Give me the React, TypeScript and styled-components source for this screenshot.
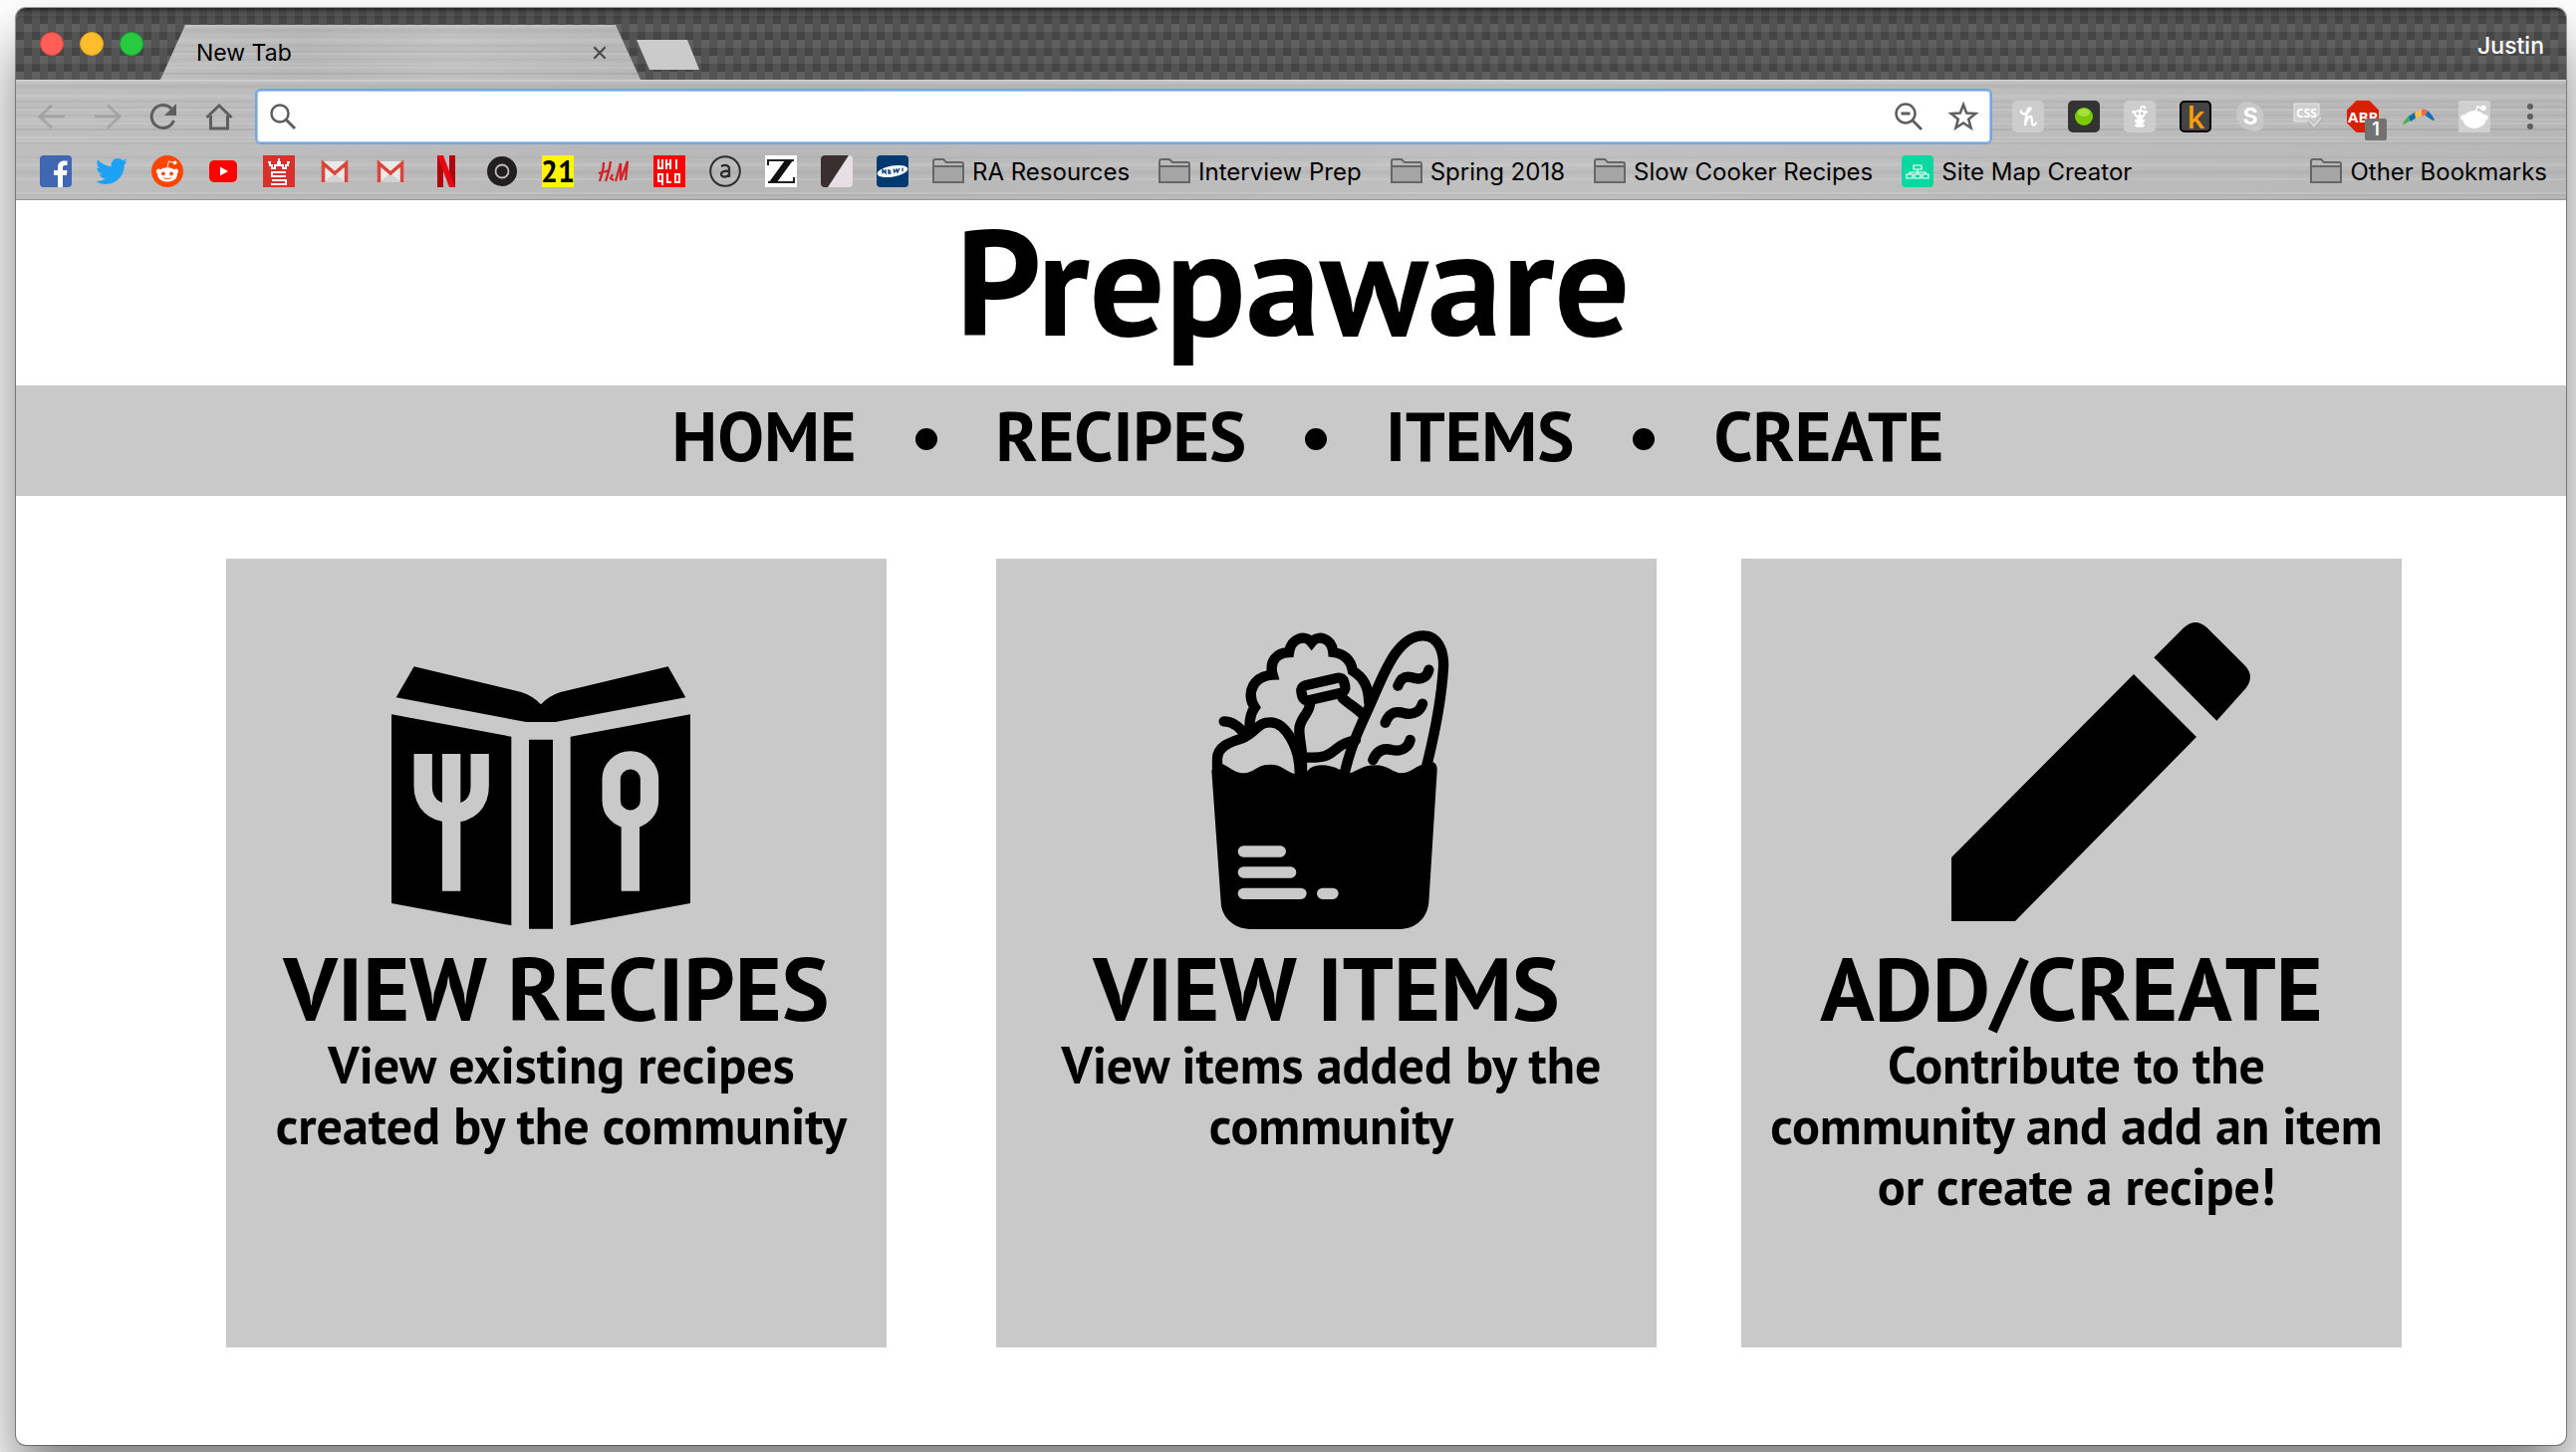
import React from "react";
import styled, { createGlobalStyle, css } from "styled-components";
import { FaTwitter, FaRedditAlien } from "react-icons/fa";

const uiFont = `Inter, Roboto, "Liberation Sans", sans-serif`;
const pageFont = `"PT Sans", Lato, "Open Sans", sans-serif`;

const Global = createGlobalStyle`
  *, *::before, *::after { box-sizing: border-box; }
  body { margin: 0; padding: 8px 10px 7px 16px; background: #fff; color: #000; }
  button { border: 0; padding: 0; background: none; font: inherit; color: inherit; cursor: pointer; }
  a { color: inherit; text-decoration: none; }
  ul { list-style: none; margin: 0; padding: 0; }
  svg { display: block; overflow: visible; }
`;

const brushedMetal = css`
  background-color: #bbbbbb;
  background-image:
    repeating-linear-gradient(180deg, rgba(255,255,255,0.11) 0 2px, transparent 2px 6px, rgba(0,0,0,0.03) 6px 8px, transparent 8px 14px),
    repeating-linear-gradient(180deg, transparent 0 4px, rgba(0,0,0,0.035) 4px 6px, transparent 6px 16px, rgba(255,255,255,0.08) 16px 18px, transparent 18px 22px),
    linear-gradient(90deg, rgba(255,255,255,0.05), rgba(0,0,0,0.02) 30%, rgba(255,255,255,0.08) 60%, rgba(0,0,0,0.02));
`;

const Window = styled.div`
  display: flex;
  flex-direction: column;
  min-height: calc(100vh - 15px);
  border-radius: 10px;
  overflow: hidden;
  background: #fff;
  box-shadow: 0 0 0 1px rgba(0, 0, 0, 0.38), 0 36px 60px rgba(0, 0, 0, 0.5);
`;

/* carbon-fibre weave: light and dark 8px threads in a brick pattern */
const TitleBar = styled.div`
  display: flex;
  align-items: flex-end;
  height: 72px;
  padding: 0 22px 0 24px;
  font-family: ${uiFont};
  background-color: #535353;
  background-image:
    linear-gradient(180deg, rgba(0,0,0,0.6) 0, rgba(0,0,0,0.2) 4px, transparent 12px),
    conic-gradient(at 8px 8px, transparent 75%, #606060 0),
    conic-gradient(at 8px 8px, transparent 75%, #606060 0),
    conic-gradient(at 8px 8px, transparent 75%, #454545 0),
    conic-gradient(at 8px 8px, transparent 75%, #454545 0);
  background-size: auto, 16px 32px, 16px 32px, 16px 32px, 16px 32px;
  background-position: 0 0, 0 0, 8px 16px, 8px 8px, 0 24px;
`;

const Lights = styled.div`
  display: flex;
  gap: 16px;
  height: 72px;
  align-items: center;
`;

const Light = styled.button<{ $fill: string; $edge: string }>`
  width: 24px;
  height: 24px;
  border-radius: 50%;
  background: ${(p) => p.$fill};
  border: 1px solid ${(p) => p.$edge};
`;

const Tab = styled.div`
  ${brushedMetal}
  display: flex;
  align-items: center;
  justify-content: space-between;
  width: 482px;
  height: 55px;
  margin-left: 17px;
  padding: 0 34px 0 36px;
  font-size: 23px;
  clip-path: polygon(25px 0, calc(100% - 25px) 0, 100% 100%, 0 100%);
`;

const NewTab = styled.button`
  width: 63px;
  height: 30px;
  margin: 0 0 10px -4px;
  background: #cbcbcb;
  clip-path: polygon(0 0, 51px 0, 100% 100%, 13px 100%);
`;

const Profile = styled.button`
  height: 72px;
  margin-left: auto;
  padding-top: 4px;
  font-size: 23px;
  font-weight: 500;
  color: #fff;
`;

const Chrome = styled.div`
  ${brushedMetal}
  border-top: 1px solid #d4d4d4;
  border-bottom: 1px solid #9b9b9b;
  font-family: ${uiFont};
  font-size: 24px;
`;

const Toolbar = styled.div`
  display: flex;
  align-items: center;
  height: 72px;
  padding: 0 28px 0 20px;
`;

const IconRow = styled.div`
  display: flex;
  gap: 24px;
`;

const IconButton = styled.button<{ $faded?: boolean }>`
  position: relative;
  width: 32px;
  height: 32px;
  opacity: ${(p) => (p.$faded ? 0.25 : 1)};
`;

const UrlBox = styled.form`
  display: flex;
  flex: 1;
  align-items: center;
  height: 56px;
  margin: 0 20px;
  padding: 0 10px;
  background: #fff;
  border: 2px solid #74a5dc;
  border-radius: 6px;
  box-shadow: inset 0 0 0 1px #a5cbf2;
`;

const UrlInput = styled.input`
  flex: 1;
  min-width: 0;
  height: 44px;
  border: 0;
  outline: 0;
  background: transparent;
  font: inherit;
`;

const MenuButton = styled.button`
  width: 16px;
  height: 32px;
  margin-left: 32px;
`;

const Bookmarks = styled.nav`
  display: flex;
  align-items: center;
  justify-content: space-between;
  height: 47px;
  padding: 0 14px 9px 24px;
`;

const BookmarkList = styled.ul`
  display: flex;
  gap: 24px;
`;

const Bookmark = styled.a`
  display: flex;
  align-items: center;
  gap: 8px;
  height: 32px;
  white-space: nowrap;
`;

const BookmarkText = styled.span`
  padding-right: 5px;
`;

const Header = styled.header`
  padding: 0 0 26px 4px;
  text-align: center;
  font-family: ${pageFont};
`;

const Brand = styled.h1`
  margin: 0;
  font-size: 150px;
  line-height: 160px;
  font-weight: 700;
`;

const SiteNav = styled.nav`
  background: #c9c9c9;
  font-family: ${pageFont};
  padding: 0 0 11px 34px;
`;

const NavList = styled.ul`
  display: flex;
  justify-content: center;
  align-items: center;
  gap: 59px;
  font-size: 70px;
  line-height: 100px;
  font-weight: 700;
`;

const Dot = styled.li`
  width: 22px;
  height: 22px;
  margin-top: 8px;
  border-radius: 50%;
  background: #000;
`;

const Cards = styled.main`
  display: grid;
  grid-template-columns: 211fr 663fr 110fr 663fr 85fr 663fr 165fr;
  padding: 63px 0 96px;
  font-family: ${pageFont};
`;

const Card = styled.a<{ $column: number }>`
  grid-column: ${(p) => p.$column};
  min-height: 792px;
  background: #c9c9c9;
  text-align: center;
  font-weight: 700;
`;

const Art = styled.div<{ $pad: string }>`
  display: flex;
  justify-content: center;
  align-items: flex-end;
  height: 372px;
  padding: ${(p) => p.$pad};
`;

const CardTitle = styled.h2`
  margin: 12px 0 0;
  font-size: 90px;
  line-height: 93px;
  white-space: nowrap;
`;

const CardText = styled.p`
  margin: 0;
  padding: 0 16px 0 26px;
  font-size: 52px;
  line-height: 61px;
`;

/* ---------- toolbar glyphs ---------- */

const Glyph = ({ children, size = 32 }: { children: React.ReactNode; size?: number }) => (
  <svg width={size} height={size} viewBox="0 0 32 32" fill="none" aria-hidden="true">
    {children}
  </svg>
);

const line = { stroke: "#5e5e5e", strokeWidth: 3, fill: "none" } as const;

const Back = () => <Glyph><path d="M29 16H4M16 4.500L4 16l12 11.500" {...line} /></Glyph>;
const Forward = () => <Glyph><path d="M3 16h25M16 4.500L28 16 16 27.500" {...line} /></Glyph>;
const Reload = () => (
  <Glyph>
    <path d="M26.500 20A11.500 11.500 0 1 1 24 8" {...line} />
    <path d="M29 3v12H17z" fill="#5e5e5e" />
  </Glyph>
);
const HomeGlyph = () => <Glyph><path d="M3.500 17L16 5l12.500 12M7.500 15v13h17V15" {...line} /></Glyph>;
const Search = () => (
  <Glyph>
    <circle cx="13" cy="13" r="8.500" {...line} strokeWidth={2.500} />
    <path d="M19 19l9 9" {...line} />
  </Glyph>
);
const ZoomOut = () => (
  <Glyph>
    <circle cx="13" cy="13" r="9.500" {...line} strokeWidth={2.500} />
    <path d="M8.500 13h9M20 20l9 9" {...line} strokeWidth={2.800} />
  </Glyph>
);
const Star = () => (
  <Glyph>
    <path d="M15 4l3.200 8.500 9.100.5-7.100 5.700 2.400 8.800L15 22.500l-7.600 5 2.400-8.800L2.700 13l9.100-.5z" {...line} strokeWidth={2.500} />
  </Glyph>
);
const Dots = () => (
  <svg width="16" height="32" viewBox="0 0 16 32" fill="#5e5e5e" aria-hidden="true">
    <circle cx="8" cy="6" r="3" /><circle cx="8" cy="16" r="3" /><circle cx="8" cy="26" r="3" />
  </svg>
);
const Close = () => (
  <svg width="14" height="14" viewBox="0 0 16 16" aria-hidden="true">
    <path d="M1.500 1.500l13 13M14.500 1.500l-13 13" stroke="#4a4a4a" strokeWidth="2.500" />
  </svg>
);

/* ---------- extension icons ---------- */

const Honey = () => (
  <Glyph>
    <rect width="32" height="32" rx="5" fill="#cdcdcd" />
    <path d="M9 10.500C9 14 13 14 15.500 12C19 9 19.500 7 17.500 7.500C14.500 8 13.500 17 13 25C14 20 16 15.500 18.500 16C21 16.500 18.500 24 21 24.500C22.500 24.500 23.500 23.500 24 22.500" stroke="#fff" strokeWidth="2.300" strokeLinecap="round" />
  </Glyph>
);
const GreenDot = () => (
  <Glyph>
    <rect width="32" height="32" rx="5" fill="#333" />
    <circle cx="16" cy="16" r="9" fill="#7acb05" />
    <ellipse cx="16" cy="12" rx="6" ry="4" fill="#a5e03c" />
  </Glyph>
);
const RedditRobot = () => (
  <Glyph>
    <rect width="32" height="32" rx="5" fill="#cdcdcd" />
    <path d="M16 10l2-4h3" stroke="#fff" strokeWidth="1.500" />
    <circle cx="21" cy="7" r="1.500" fill="#fff" />
    <ellipse cx="16" cy="13.500" rx="5.500" ry="4.500" fill="#fff" />
    <circle cx="10" cy="11.500" r="1.800" fill="#fff" /><circle cx="22" cy="11.500" r="1.800" fill="#fff" />
    <circle cx="13.800" cy="13" r="1.400" fill="#bdbdbd" /><circle cx="18.200" cy="13" r="1.400" fill="#bdbdbd" />
    <ellipse cx="16" cy="21" rx="3.800" ry="4.500" fill="#fff" />
    <path d="M11.500 19l1 3M20.500 19l-1 3" stroke="#fff" strokeWidth="1.500" />
    <ellipse cx="16" cy="25" rx="5" ry="1.800" fill="#fff" />
  </Glyph>
);
const Klipper = () => (
  <Glyph>
    <rect x="1" y="1" width="30" height="30" rx="4" fill="#444" stroke="#000" strokeWidth="2" />
    <text x="16.500" y="28" textAnchor="middle" fontFamily="Open Sans, sans-serif" fontWeight="600" fontSize="31" fill="#ff9d0a">k</text>
  </Glyph>
);
const Skype = () => (
  <Glyph>
    <circle cx="12" cy="12" r="11" fill="#c8c8c8" />
    <circle cx="15" cy="16" r="13.500" fill="#c8c8c8" />
    <circle cx="20" cy="22" r="9" fill="#c8c8c8" />
    <text x="15" y="24" textAnchor="middle" fontFamily="Inter, sans-serif" fontWeight="700" fontSize="23" fill="#fff">S</text>
  </Glyph>
);
const CssCheck = () => (
  <Glyph>
    <path d="M3 3h25v18H3z" fill="#cfcfcf" stroke="#e8e8e8" />
    <text x="15.500" y="17" textAnchor="middle" fontFamily="Open Sans, sans-serif" fontWeight="700" fontSize="12" fill="#fff">CSS</text>
    <path d="M18 20l5 5 7-8" stroke="#a3a3a3" strokeWidth="4.500" />
    <path d="M18 20l5 5 7-8" stroke="#d6d6d6" strokeWidth="3" />
  </Glyph>
);
const AdBlock = () => (
  <Glyph>
    <path d="M9.500 0h13L32 9.500v13L22.500 32h-13L0 22.500v-13z" fill="#d81f00" />
    <text x="16" y="21.500" textAnchor="middle" fontFamily="Open Sans, sans-serif" fontWeight="700" fontSize="15" fill="#fff">ABP</text>
  </Glyph>
);
const Boomerang = () => (
  <Glyph>
    <path d="M0 24c1-4 4-7 7-9l3 4c-3 1-6 4-9 5z" fill="#4bb061" />
    <path d="M6 16l7-5 1 6-6 4z" fill="#0d6fb5" />
    <path d="M12 12l7-3v6l-6 3z" fill="#fcc04a" />
    <path d="M19 9c3-1 5 0 6 2l-2 4-4 0z" fill="#ef6b50" />
    <path d="M25 10c3 3 6 6 7 10-3 0-6-3-9-5z" fill="#0d6fb5" />
  </Glyph>
);
const RedditPale = () => (
  <Glyph>
    <rect width="32" height="32" rx="2" fill="#d0d0d0" />
    <path d="M16 15l3-9 6 2" stroke="#fff" strokeWidth="1.500" />
    <circle cx="25" cy="7.500" r="2.800" fill="#fff" />
    <ellipse cx="16" cy="19" rx="11.500" ry="9" fill="#fff" />
    <circle cx="5" cy="17" r="2.800" fill="#fff" /><circle cx="27" cy="17" r="2.800" fill="#fff" />
  </Glyph>
);

const Badge = styled.span`
  position: absolute;
  left: 18px;
  top: 18px;
  width: 22px;
  height: 22px;
  border-radius: 2px;
  background: #727272;
  color: #fff;
  font-size: 18px;
  line-height: 22px;
  font-weight: 600;
  text-align: center;
`;

/* ---------- bookmark icons ---------- */

const Facebook = () => (
  <Glyph>
    <rect width="32" height="32" rx="4" fill="#4267b2" />
    <path d="M18 32V20h-4v-5h4v-3c0-4 2.500-6.500 6.500-6.500h3V10h-2.300C23.500 10 23 11 23 12.500V15h4.500l-.7 5H23v12z" fill="#fff" />
  </Glyph>
);
const Twitter = () => <FaTwitter size={32} color="#1da1f2" aria-hidden="true" />;

const Disc = styled.span`
  display: flex;
  align-items: center;
  justify-content: center;
  width: 32px;
  height: 32px;
  border-radius: 50%;
  background: #ff4500;
`;
const Reddit = () => <Disc><FaRedditAlien size={24} color="#fff" aria-hidden="true" /></Disc>;
const YouTube = () => (
  <Glyph>
    <rect x="2" y="5" width="28" height="22" rx="5" fill="#f00" />
    <path d="M13 11.500l8 4.500-8 4.500z" fill="#fff" />
  </Glyph>
);
const Crown = () => (
  <Glyph>
    <rect width="32" height="32" fill="#d8302a" />
    <path d="M5 7h2v3h2v3h3v-3h3V7h2v3h3v3h3v-3h2V7h2M16 3v4M9 17h14M9 16v5h14M9 25h14v4H8" stroke="#fff" strokeWidth="2" />
  </Glyph>
);
const Gmail = () => (
  <Glyph>
    <path d="M3 6h26v21H3z" fill="#e9e9e9" />
    <path d="M16 18l11 9H5z" fill="#d2d2d2" />
    <path d="M4.500 27V8L16 18 27.500 8v19" stroke="#db4437" strokeWidth="3.500" />
  </Glyph>
);
const Netflix = () => (
  <Glyph>
    <path d="M7 0h6v32H7zM19 0h6v32h-6z" fill="#b1060f" />
    <path d="M7 0h6l12 32h-6z" fill="#e50914" />
  </Glyph>
);
const Ring = () => (
  <Glyph>
    <circle cx="16" cy="16" r="15" fill="#231f20" />
    <circle cx="16" cy="16" r="6.500" stroke="#bdbdbd" strokeWidth="1.800" />
  </Glyph>
);
const TwentyOne = () => (
  <Glyph>
    <rect width="32" height="32" fill="#fff500" />
    <text x="16" y="27" textAnchor="middle" fontFamily="PT Sans, Roboto, sans-serif" fontWeight="700" fontSize="30" fill="#000">21</text>
  </Glyph>
);
const HandM = () => (
  <Glyph>
    <path d="M6 7C6 14 4 20 2 26M13 6C12 14 10 20 8 26M1 18l11-3M15 19l-2 4 3 2M18 26l5-18v17L30 6l-2 19" stroke="#d2232a" strokeWidth="2.300" />
  </Glyph>
);
const Uniqlo = () => (
  <Glyph>
    <rect width="32" height="32" fill="#f00" />
    <path d="M5 4v9h4V4M13 14V4M13 9h4M17 4v10M23 4v10M5 27v-8h4v11M5 26h4M14 18v9h4M22 19h4v8h-4z" stroke="#fff" strokeWidth="2" />
  </Glyph>
);
const CircledA = () => (
  <Glyph>
    <circle cx="16" cy="16" r="14.800" stroke="#2d2d2d" strokeWidth="2" />
    <path d="M12 11c4-2 8-1 8 2.500V22M20 15.500c-5 0-8 1-8 3.500 0 4 8 3 8-1" stroke="#2d2d2d" strokeWidth="2.300" />
  </Glyph>
);
const Zed = () => (
  <Glyph>
    <rect width="32" height="32" fill="#fff" />
    <path d="M3 10V5h26M3 27h26v-5" stroke="#222" strokeWidth="2" />
    <path d="M20 5h8L12 27H4z" fill="#111" />
  </Glyph>
);
const Split = () => (
  <Glyph>
    <rect width="32" height="32" rx="4" fill="#e6e0e6" />
    <path d="M4 0h24L7 32H4a4 4 0 0 1-4-4V4a4 4 0 0 1 4-4z" fill="#3b2e2e" />
  </Glyph>
);
const Globe = () => (
  <Glyph>
    <rect width="32" height="32" rx="4" fill="#003a70" />
    <ellipse cx="16" cy="16" rx="15.500" ry="5.500" transform="rotate(-10 16 16)" fill="#fff" />
    <path d="M6 18.500v-4l3 3.500v-4M12 16h2.500M12 14v4h2.500M17 13.500l1 3.500 2-3 1 3 2-4M26 12.500v3.500" stroke="#003a70" strokeWidth="1.300" />
  </Glyph>
);
const Folder = () => (
  <Glyph>
    <path d="M1 27V6q0-2 2-2h8l3 3h15q2 0 2 2v18z" stroke="#666" strokeWidth="2" fill="#b9b9b9" />
    <path d="M1 11h30v16H1z" fill="#a5a5a5" stroke="#666" strokeWidth="2" />
  </Glyph>
);
const SiteMap = () => (
  <Glyph>
    <rect width="32" height="32" rx="4" fill="#0ad8a0" />
    <path d="M12 10h8v4h-8zM5 19h6v4H5zM13 19h6v4h-6zM21 19h6v4h-6zM16 14v5M8 19v-2h16v2" stroke="#fff" strokeWidth="1.200" />
  </Glyph>
);

/* ---------- card artwork ---------- */

const BookArt = () => (
  <svg width="300" height="300" viewBox="99 -21 900 900" aria-hidden="true">
    <path d="M167 88L490 165Q525 176 549 202Q573 176 608 165L932 88L985 181L592 255H505L113 181z" />
    <path d="M99 232L460 299V868L99 801zM999 232L638 299V868L999 801zM513 308H585V878H513z" />
    <g fill="none" stroke="#c9c9c9" strokeWidth="55">
      <path d="M194 351V448C194 500 228 530 280 530C332 530 365 500 365 448V351" />
      <path d="M279.500 351V764M818.500 545V764" />
      <rect x="761" y="370" width="115" height="178" rx="57" />
    </g>
  </svg>
);

const BagArt = () => (
  <svg width="300" height="300" viewBox="-25 68 900 900" aria-hidden="true">
    <g fill="none" stroke="#000" strokeWidth="31" strokeLinecap="round">
      <path d="M193 372C190 335 197 315 208 300C180 255 205 205 262 202C250 160 275 135 311 134C318 90 360 80 379 104C398 80 440 90 444 134C475 138 497 155 503 190C535 210 550 235 552 285" />
      <rect x="348" y="222" width="132" height="46" rx="16" transform="rotate(-13 414 245)" />
      <path d="M374 290C372 320 342 332 342 368C342 395 350 420 350 450V495" />
      <path d="M472 272C492 290 515 302 534 322" />
      <path d="M358 450C430 455 435 438 460 420C480 405 495 402 512 398" />
      <path d="M478 500C500 400 540 330 565 270C600 190 640 84 715 84C765 84 778 140 776 180C770 280 745 400 722 490" />
      <path d="M639 235C650 205 670 205 690 212C715 218 728 205 732 187M601 346C615 312 635 310 660 318C690 324 708 308 713 289M564 458C578 425 600 422 620 428C655 436 672 415 676 398" />
      <path d="M115 342C140 342 160 355 180 385" />
      <path d="M95 495V455C95 420 130 405 170 393C210 378 215 345 255 345C300 345 343 420 343 495" />
    </g>
    <path d="M78 490L110 470C140 485 150 498 175 498C205 498 215 472 255 472C290 472 300 492 328 500H358L375 483C395 470 430 470 465 488L495 498C520 490 535 474 570 474C610 474 625 498 650 498C675 498 690 480 708 474L745 465Q758 470 757 490L732 888C728 932 695 968 645 968H195C145 968 108 932 106 888z" />
    <path d="M174 734H285M174 797H316M174 861H347M412 861H443" stroke="#c9c9c9" strokeWidth="34" strokeLinecap="round" />
  </svg>
);

const PencilArt = () => (
  <svg width="300" height="300" viewBox="88 71 900 900" aria-hidden="true">
    <path d="M637 227L826 416L280 971H88V779z" />
    <path d="M698 177L788 87Q822 56 856 85L972 201Q1002 234 975 269L887 367z" />
  </svg>
);

/* ---------- data ---------- */

const navButtons = [
  { label: "Back", icon: <Back />, faded: true },
  { label: "Forward", icon: <Forward />, faded: true },
  { label: "Reload", icon: <Reload /> },
  { label: "Home", icon: <HomeGlyph /> },
];

const extensions = [
  { label: "Honey", icon: <Honey /> },
  { label: "Status", icon: <GreenDot /> },
  { label: "Reddit Enhancement", icon: <RedditRobot /> },
  { label: "Klipper", icon: <Klipper /> },
  { label: "Skype", icon: <Skype /> },
  { label: "CSS checker", icon: <CssCheck /> },
  { label: "Adblock", icon: <AdBlock />, count: "1" },
  { label: "Boomerang", icon: <Boomerang /> },
  { label: "Reddit", icon: <RedditPale /> },
];

const bookmarks: { label: string; icon: React.ReactNode; text?: boolean }[] = [
  { label: "Facebook", icon: <Facebook /> },
  { label: "Twitter", icon: <Twitter /> },
  { label: "Reddit", icon: <Reddit /> },
  { label: "YouTube", icon: <YouTube /> },
  { label: "WorldStar", icon: <Crown /> },
  { label: "Gmail", icon: <Gmail /> },
  { label: "Gmail, second account", icon: <Gmail /> },
  { label: "Netflix", icon: <Netflix /> },
  { label: "Ring", icon: <Ring /> },
  { label: "Forever 21", icon: <TwentyOne /> },
  { label: "H&M", icon: <HandM /> },
  { label: "Uniqlo", icon: <Uniqlo /> },
  { label: "Circle A", icon: <CircledA /> },
  { label: "Zara", icon: <Zed /> },
  { label: "Split", icon: <Split /> },
  { label: "Globe", icon: <Globe /> },
  { label: "RA Resources", icon: <Folder />, text: true },
  { label: "Interview Prep", icon: <Folder />, text: true },
  { label: "Spring 2018", icon: <Folder />, text: true },
  { label: "Slow Cooker Recipes", icon: <Folder />, text: true },
  { label: "Site Map Creator", icon: <SiteMap />, text: true },
];

const sections = ["HOME", "RECIPES", "ITEMS", "CREATE"];

const cards = [
  { title: "VIEW RECIPES", text: "View existing recipes created by the community", art: <BookArt />, pad: "0 32px 0 0" },
  { title: "VIEW ITEMS", text: "View items added by the community", art: <BagArt />, pad: "0" },
  { title: "ADD/CREATE", text: "Contribute to the community and add an item or create a recipe!", art: <PencilArt />, pad: "0 0 8px 58px" },
];

export default function App() {
  return (
    <>
      <Global />
      <Window>
        <TitleBar>
          <Lights>
            <Light aria-label="Close window" $fill="#ff5f57" $edge="#e2463f" />
            <Light aria-label="Minimise window" $fill="#ffbd2e" $edge="#e1a116" />
            <Light aria-label="Zoom window" $fill="#28ca41" $edge="#12ac28" />
          </Lights>
          <Tab>
            <span>New Tab</span>
            <button aria-label="Close tab"><Close /></button>
          </Tab>
          <NewTab aria-label="Open new tab" />
          <Profile>Justin</Profile>
        </TitleBar>
        <Chrome>
          <Toolbar>
            <IconRow>
              {navButtons.map((b) => (
                <IconButton key={b.label} aria-label={b.label} $faded={b.faded}>{b.icon}</IconButton>
              ))}
            </IconRow>
            <UrlBox onSubmit={(e) => e.preventDefault()}>
              <Search />
              <UrlInput type="text" aria-label="Address" />
              <IconRow>
                <IconButton type="button" aria-label="Zoom out"><ZoomOut /></IconButton>
                <IconButton type="button" aria-label="Bookmark this page"><Star /></IconButton>
              </IconRow>
            </UrlBox>
            <IconRow>
              {extensions.map((x) => (
                <IconButton key={x.label} aria-label={x.label}>
                  {x.icon}
                  {x.count && <Badge>{x.count}</Badge>}
                </IconButton>
              ))}
            </IconRow>
            <MenuButton aria-label="Menu"><Dots /></MenuButton>
          </Toolbar>
          <Bookmarks aria-label="Bookmarks">
            <BookmarkList>
              {bookmarks.map((b) => (
                <li key={b.label}>
                  <Bookmark href="#" aria-label={b.label}>
                    {b.icon}
                    {b.text && <BookmarkText>{b.label}</BookmarkText>}
                  </Bookmark>
                </li>
              ))}
            </BookmarkList>
            <Bookmark href="#"><Folder /><BookmarkText>Other Bookmarks</BookmarkText></Bookmark>
          </Bookmarks>
        </Chrome>
        <Header><Brand>Prepaware</Brand></Header>
        <SiteNav aria-label="Site">
          <NavList>
            {sections.map((s, i) => (
              <React.Fragment key={s}>
                {i > 0 && <Dot aria-hidden="true" />}
                <li><a href="#">{s}</a></li>
              </React.Fragment>
            ))}
          </NavList>
        </SiteNav>
        <Cards>
          {cards.map((c, i) => (
            <Card key={c.title} href="#" $column={2 * i + 2}>
              <Art $pad={c.pad}>{c.art}</Art>
              <CardTitle>{c.title}</CardTitle>
              <CardText>{c.text}</CardText>
            </Card>
          ))}
        </Cards>
      </Window>
    </>
  );
}
